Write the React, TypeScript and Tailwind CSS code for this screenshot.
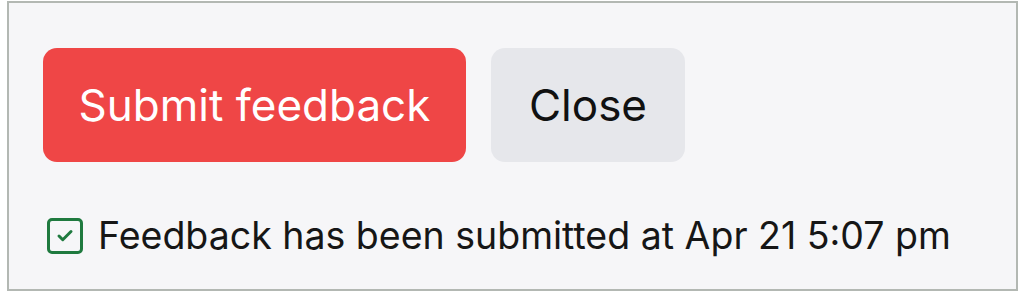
import { Check } from "lucide-react";

export default function App() {
  return (
    <div className="w-[1024px] h-[293px] bg-white pt-[1px] pl-[7px]" style={{ fontFamily: "Inter, 'Noto Sans', sans-serif" }}>
      <div className="w-[1011px] h-[290px] border-2 border-[#b3b8b3] bg-[#f6f6f8] pl-[34px] pt-[45px]">
        <div className="flex gap-[25px]">
          <button className="h-[114px] w-[423px] rounded-[14px] bg-[#ef4646] text-white text-[44px] leading-none">
            Submit feedback
          </button>
          <button className="h-[114px] w-[194px] rounded-[14px] bg-[#e6e7eb] text-[#111] text-[44px] leading-none">
            Close
          </button>
        </div>
        <div className="flex items-center mt-[55px] ml-[4px]">
          <span className="flex items-center justify-center w-[36px] h-[36px] rounded-[5px] border-[3px] border-[#1f7a3f]">
            <Check size={18} strokeWidth={4} className="text-[#1f7a3f]" />
          </span>
          <span className="ml-[15px] text-[37.5px] leading-none text-[#161616]">
            Feedback has been submitted at Apr 21 5:07 pm
          </span>
        </div>
      </div>
    </div>
  );
}
